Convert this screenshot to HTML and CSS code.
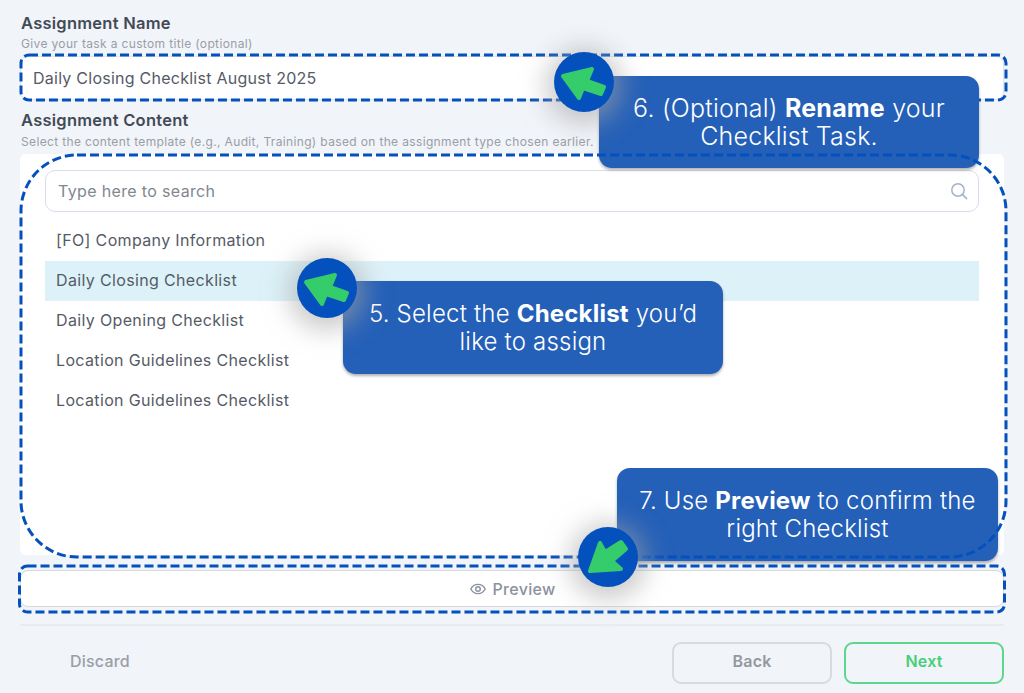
FILE: index.html
```html
<!DOCTYPE html>
<html lang="en">
<head>
    <meta charset="UTF-8">
    <title>Assignment Content</title>
    <link rel="stylesheet" href="styles.css">
</head>
<body>
<div class="page">
    <h2 class="label">Assignment Name</h2>
    <p class="hint">Give your task a custom title (optional)</p>
    <div class="name-input">Daily Closing Checklist August 2025</div>

    <h2 class="label label-content">Assignment Content</h2>
    <p class="hint">Select the content template (e.g., Audit, Training) based on the assignment type chosen earlier.</p>
    <div class="panel">
        <div class="search">
            <span>Type here to search</span>
            <svg width="18" height="18" viewBox="0 0 18 18" fill="none" stroke="#a5b3c6" stroke-width="1.5" stroke-linecap="round"><circle cx="8" cy="8" r="6.200"/><path d="M12.600 12.600l4 4"/></svg>
        </div>
        <ul class="list">
            <li>[FO] Company Information</li>
            <li class="selected">Daily Closing Checklist</li>
            <li>Daily Opening Checklist</li>
            <li>Location Guidelines Checklist</li>
            <li>Location Guidelines Checklist</li>
        </ul>
    </div>

    <button class="preview">
        <svg width="18" height="18" viewBox="0 0 18 18" fill="none" stroke="#8b929c" stroke-width="1.4"><path d="M1.800 9C3.400 5.900 6 4.400 9 4.400s5.600 1.500 7.200 4.600c-1.600 3.100-4.200 4.600-7.200 4.600S3.400 12.100 1.800 9z"/><circle cx="9" cy="9" r="2.300"/></svg>
        Preview
    </button>

    <div class="footer">
        <button class="discard">Discard</button>
        <div class="footer-right">
            <button class="btn btn-back">Back</button>
            <button class="btn btn-next">Next</button>
        </div>
    </div>
</div>

<!-- tutorial annotations drawn over the page -->
<svg class="dash dash-low" width="1024" height="693"><rect x="21" y="55" width="985" height="45" rx="8"/></svg>

<div class="callout callout-6">6. (Optional) <b>Rename</b> your<br>Checklist Task.</div>
<div class="callout callout-5">5. Select the <b>Checklist</b> you’d<br>like to assign</div>
<div class="callout callout-7">7. Use <b>Preview</b> to confirm the<br>right Checklist</div>

<svg class="dash dash-high" width="1024" height="693">
    <rect x="21" y="155" width="985" height="402" rx="56"/>
    <rect x="19.500" y="566" width="985" height="46" rx="8"/>
</svg>

<div class="pointer pointer-6">
    <svg width="60" height="60" viewBox="0 0 60 60"><path d="M9 24L38 17L33 29L50 35L47 42L29 36L25 46z"/></svg>
</div>
<div class="pointer pointer-5">
    <svg width="60" height="60" viewBox="0 0 60 60"><path d="M9 24L38 17L33 29L50 35L47 42L29 36L25 46z"/></svg>
</div>
<div class="pointer pointer-7">
    <svg width="60" height="60" viewBox="0 0 60 60"><path d="M12 44L22 16L27 25L43 15L48 22L34 34L43 42z"/></svg>
</div>
</body>
</html>
```

FILE: styles.css
```css
* { box-sizing: border-box; }
html, body { margin: 0; height: 693px; overflow: hidden; }
body { position: relative; background: #f1f4f9; font-family: Inter, "Liberation Sans", sans-serif; color: #4a5260; }
button { font-family: inherit; }

.page { padding: 14px 20px 0 21px; }
.label { margin: 0; font-size: 16.500px; line-height: 18px; font-weight: 600; letter-spacing: .25px; color: #434a56; }
.label-content { margin-top: 11px; }
.hint { margin: 5px 0 0; font-size: 12px; line-height: 13px; letter-spacing: .35px; color: #9a9ea6; }
.label-content + .hint { margin-top: 6px; }
.name-input { margin: 6px 0 0 -1px; height: 44px; padding: 0 12px; display: flex; align-items: center; background: #fff; border: 1px solid #dfe4ee; border-radius: 8px; font-size: 16px; letter-spacing: .25px; color: #555b66; }

.panel { margin: 6px 0 0 -1px; height: 401px; padding: 16px 25px 0; background: #fff; border-radius: 6px; }
.search { height: 42px; padding: 0 10px 0 12px; display: flex; align-items: center; justify-content: space-between; border: 1.500px solid #d6deea; border-radius: 10px; font-size: 16px; letter-spacing: .35px; color: #82878f; }
.list { margin: 9px 0 0; padding: 0; list-style: none; }
.list li { height: 40px; padding: 0 12px 2px 11px; display: flex; align-items: center; font-size: 16px; letter-spacing: .35px; color: #555b66; }
.list li.selected { background: #dcf2f8; }

.preview { margin: 15px 0 0 -1px; width: 984px; height: 37px; display: flex; align-items: center; justify-content: center; gap: 6px; background: #fff; border: 1.500px solid #d6d8dc; border-radius: 8px; font-size: 16px; font-weight: 500; letter-spacing: .3px; color: #8b929c; }

.footer { margin: 17px 0 0 -1px; padding-top: 16px; display: flex; justify-content: space-between; border-top: 2px solid #e8ebf0; }
.discard { width: 160px; padding-bottom: 5px; background: none; border: 0; font-size: 16px; font-weight: 500; letter-spacing: .2px; color: #9a9ea6; }
.footer-right { display: flex; gap: 12px; }
.btn { width: 160px; height: 42px; padding-bottom: 5px; background: none; border-radius: 9px; font-size: 16px; font-weight: 600; letter-spacing: .2px; }
.btn-back { border: 2px solid #d8dadd; color: #94989f; }
.btn-next { border: 2px solid #5fd68b; color: #47cf78; }

.dash { position: absolute; left: 0; top: 0; }
.dash rect { fill: none; stroke: #0451bd; stroke-width: 3; stroke-dasharray: 9 4; }
.dash-low { z-index: 1; }
.dash-high { z-index: 3; }

.callout { position: absolute; z-index: 2; align-content: center; text-align: center; background: #2560b8; border-radius: 13px; box-shadow: 0 2px 3px rgba(60, 60, 60, .4); font-size: 24px; line-height: 28px; font-weight: 300; letter-spacing: .2px; color: #fff; }
.callout b { font-weight: 700; }
.callout-6 { left: 599px; top: 76px; width: 380px; height: 92px; font-size: 25px; }
.callout-5 { left: 343px; top: 281px; width: 380px; height: 93px; }
.callout-7 { left: 617px; top: 468px; width: 381px; height: 93px; }

.pointer { position: absolute; z-index: 4; width: 60px; height: 60px; background: #0451bd; border-radius: 50%; box-shadow: 0 4px 26px 8px rgba(165, 165, 165, .6); }
.pointer svg { display: block; }
.pointer path { fill: #35cc6b; stroke: #35cc6b; stroke-width: 4; stroke-linejoin: round; }
.pointer-6 { left: 554px; top: 52px; }
.pointer-5 { left: 297px; top: 258px; }
.pointer-7 { left: 578px; top: 527px; }
```
